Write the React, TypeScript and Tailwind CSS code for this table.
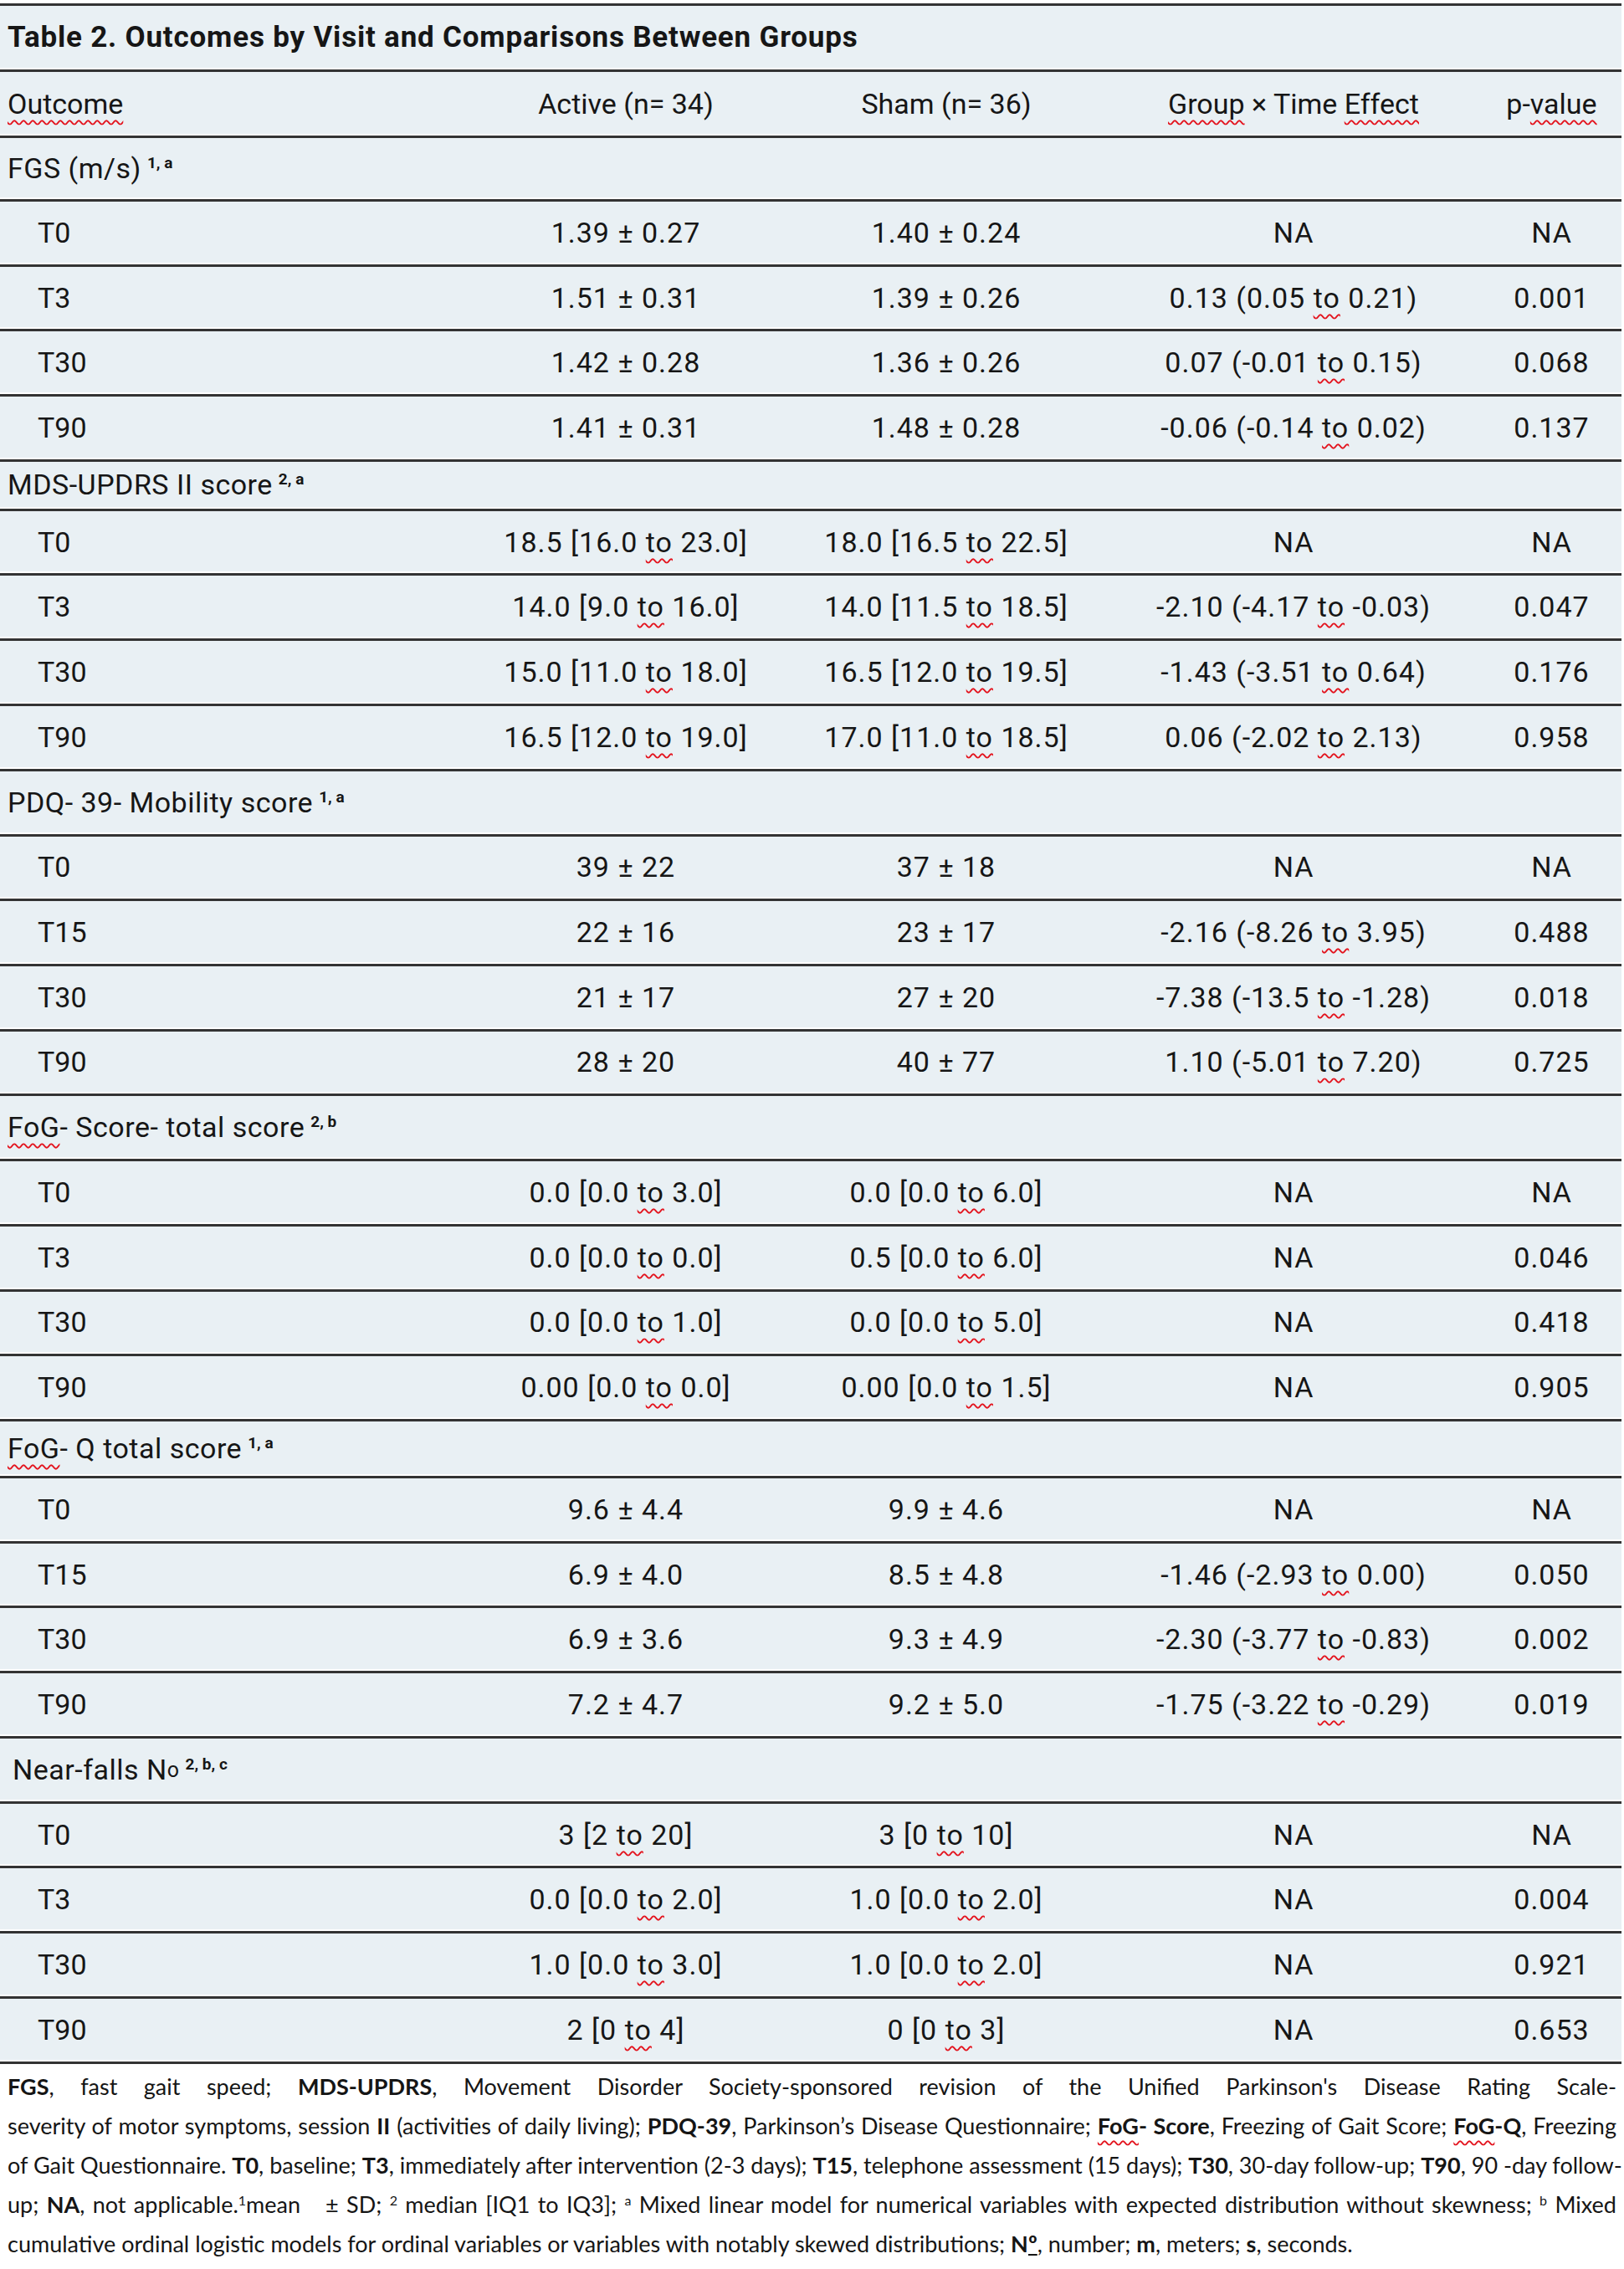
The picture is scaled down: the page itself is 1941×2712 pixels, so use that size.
import type { ReactNode } from "react";

type DataRow = [string, string, string, string, string];

interface Group {
  title: ReactNode;
  height: string;
  indent?: string;
  rows: DataRow[];
}

// red spell-check squiggle, kept because it is in the screenshot
function Sq({ children }: { children: ReactNode }) {
  return (
    <span className="underline decoration-wavy decoration-[#e3141e] decoration-[2px] underline-offset-[7px]">
      {children}
    </span>
  );
}

function Sup({ children }: { children: ReactNode }) {
  return <sup className="text-[19px] font-bold ml-[7px] relative -top-[12px] tracking-normal">{children}</sup>;
}

// wrap every "to" inside a range with the squiggle
function withTo(text: string) {
  const parts = text.split(" to ");
  return parts.map((p, i) => (
    <span key={i}>
      {p}
      {i < parts.length - 1 && (
        <>
          {" "}
          <Sq>to</Sq>{" "}
        </>
      )}
    </span>
  ));
}

const groups: Group[] = [
  {
    title: (
      <>
        FGS (m/s)<Sup>1, a</Sup>
      </>
    ),
    height: "h-[76px]",
    rows: [
      ["T0", "1.39 ± 0.27", "1.40 ± 0.24", "NA", "NA"],
      ["T3", "1.51 ± 0.31", "1.39 ± 0.26", "0.13 (0.05 to 0.21)", "0.001"],
      ["T30", "1.42 ± 0.28", "1.36 ± 0.26", "0.07 (-0.01 to 0.15)", "0.068"],
      ["T90", "1.41 ± 0.31", "1.48 ± 0.28", "-0.06 (-0.14 to 0.02)", "0.137"],
    ],
  },
  {
    title: (
      <>
        MDS-UPDRS II score<Sup>2, a</Sup>
      </>
    ),
    height: "h-[59px]",
    rows: [
      ["T0", "18.5 [16.0 to 23.0]", "18.0 [16.5 to 22.5]", "NA", "NA"],
      ["T3", "14.0 [9.0 to 16.0]", "14.0 [11.5 to 18.5]", "-2.10 (-4.17 to -0.03)", "0.047"],
      ["T30", "15.0 [11.0 to 18.0]", "16.5 [12.0 to 19.5]", "-1.43 (-3.51 to 0.64)", "0.176"],
      ["T90", "16.5 [12.0 to 19.0]", "17.0 [11.0 to 18.5]", "0.06 (-2.02 to 2.13)", "0.958"],
    ],
  },
  {
    title: (
      <>
        PDQ- 39- Mobility score<Sup>1, a</Sup>
      </>
    ),
    height: "h-[78px]",
    rows: [
      ["T0", "39 ± 22", "37 ± 18", "NA", "NA"],
      ["T15", "22 ± 16", "23 ± 17", "-2.16 (-8.26 to 3.95)", "0.488"],
      ["T30", "21 ± 17", "27 ± 20", "-7.38 (-13.5 to -1.28)", "0.018"],
      ["T90", "28 ± 20", "40 ± 77", "1.10 (-5.01 to 7.20)", "0.725"],
    ],
  },
  {
    title: (
      <>
        <Sq>FoG</Sq>- Score- total score<Sup>2, b</Sup>
      </>
    ),
    height: "h-[78px]",
    rows: [
      ["T0", "0.0 [0.0 to 3.0]", "0.0 [0.0 to 6.0]", "NA", "NA"],
      ["T3", "0.0 [0.0 to 0.0]", "0.5 [0.0 to 6.0]", "NA", "0.046"],
      ["T30", "0.0 [0.0 to 1.0]", "0.0 [0.0 to 5.0]", "NA", "0.418"],
      ["T90", "0.00 [0.0 to 0.0]", "0.00 [0.0 to 1.5]", "NA", "0.905"],
    ],
  },
  {
    title: (
      <>
        <Sq>FoG</Sq>- Q total score<Sup>1, a</Sup>
      </>
    ),
    height: "h-[68px]",
    rows: [
      ["T0", "9.6 ± 4.4", "9.9 ± 4.6", "NA", "NA"],
      ["T15", "6.9 ± 4.0", "8.5 ± 4.8", "-1.46 (-2.93 to 0.00)", "0.050"],
      ["T30", "6.9 ± 3.6", "9.3 ± 4.9", "-2.30 (-3.77 to -0.83)", "0.002"],
      ["T90", "7.2 ± 4.7", "9.2 ± 5.0", "-1.75 (-3.22 to -0.29)", "0.019"],
    ],
  },
  {
    title: (
      <>
        Near-falls N<span className="text-[25px] relative -top-[3px]">o</span>
        <Sup>2, b, c</Sup>
      </>
    ),
    height: "h-[78px]",
    indent: "pl-[15px]",
    rows: [
      ["T0", "3 [2 to 20]", "3 [0 to 10]", "NA", "NA"],
      ["T3", "0.0 [0.0 to 2.0]", "1.0 [0.0 to 2.0]", "NA", "0.004"],
      ["T30", "1.0 [0.0 to 3.0]", "1.0 [0.0 to 2.0]", "NA", "0.921"],
      ["T90", "2 [0 to 4]", "0 [0 to 3]", "NA", "0.653"],
    ],
  },
];

const rowBase =
  "grid grid-cols-[555px_386px_380px_450px_167px] items-center border-b-[3px] border-[#333] shadow-[inset_0_-2px_0_#ffffff]";

function B({ children }: { children: ReactNode }) {
  return <span className="font-bold">{children}</span>;
}

function FSup({ children }: { children: ReactNode }) {
  return <sup className="text-[16px] relative -top-[9px]">{children}</sup>;
}

function Footnote() {
  const justify = "text-justify [text-align-last:justify] whitespace-nowrap";
  return (
    <div className="px-[9px] pt-[3px] text-[27px] leading-[47px] text-[#151515] font-['Lato',sans-serif]">
      <div className={justify}>
        <B>FGS</B>, fast gait speed; <B>MDS-UPDRS</B>, Movement Disorder Society-sponsored revision of the Unified
        Parkinson's Disease Rating Scale-
      </div>
      <div className={justify}>
        severity of motor symptoms, session <B>II</B> (activities of daily living); <B>PDQ-39</B>, Parkinson’s Disease
        Questionnaire;{" "}
        <B>
          <Sq>FoG</Sq>- Score
        </B>
        , Freezing of Gait Score;{" "}
        <B>
          <Sq>FoG</Sq>-Q
        </B>
        , Freezing
      </div>
      <div className={justify}>
        of Gait Questionnaire. <B>T0</B>, baseline; <B>T3</B>, immediately after intervention (2-3 days); <B>T15</B>,
        telephone assessment (15 days); <B>T30</B>, 30-day follow-up; <B>T90</B>, 90 -day follow-
      </div>
      <div className={justify}>
        up; <B>NA</B>, not applicable.<FSup>1</FSup>mean<span className="inline-block w-[30px]" />± SD;{" "}
        <FSup>2</FSup> median [IQ1 to IQ3]; <FSup>a</FSup> Mixed linear model for numerical variables with expected
        distribution without skewness; <FSup>b</FSup> Mixed
      </div>
      <div className="whitespace-nowrap">
        cumulative ordinal logistic models for ordinal variables or variables with notably skewed distributions;{" "}
        <B>
          N<span className="underline">º</span>
        </B>
        , number; <B>m</B>, meters; <B>s</B>, seconds.
      </div>
    </div>
  );
}

export default function App() {
  return (
    <div className="w-[1941px] min-h-[2712px] bg-white pt-[4px] font-['Roboto',sans-serif] text-[#161616]">
      <div className="w-[1938px] bg-[#e9f0f4] border-t-[3px] border-[#333] text-[34px] tracking-[0.5px]">
        {/* title */}
        <div className="h-[79px] flex items-center pl-[9px] border-b-[3px] border-[#333] shadow-[inset_0_-2px_0_#ffffff] font-bold text-[35px] tracking-[0.8px]">
          Table 2. Outcomes by Visit and Comparisons Between Groups
        </div>

        {/* column headers */}
        <div className={`${rowBase} h-[79px] tracking-normal`}>
          <div className="pl-[9px]">
            <Sq>Outcome</Sq>
          </div>
          <div className="text-center">Active (n= 34)</div>
          <div className="text-center">Sham (n= 36)</div>
          <div className="text-center">
            <Sq>Group</Sq> × Time <Sq>Effect</Sq>
          </div>
          <div className="text-center">
            p-<Sq>value</Sq>
          </div>
        </div>

        {groups.map((g, gi) => (
          <div key={gi}>
            <div className={`${rowBase} ${g.height}`}>
              <div className={`col-span-5 ${g.indent ?? "pl-[9px]"}`}>{g.title}</div>
            </div>
            {g.rows.map((r) => (
              <div key={r[0]} className={`${rowBase} h-[77.7px] tracking-[1px]`}>
                <div className="pl-[45px] tracking-normal">{r[0]}</div>
                <div className="text-center">{withTo(r[1])}</div>
                <div className="text-center">{withTo(r[2])}</div>
                <div className="text-center">{withTo(r[3])}</div>
                <div className="text-center">{r[4]}</div>
              </div>
            ))}
          </div>
        ))}
      </div>

      <Footnote />
    </div>
  );
}
